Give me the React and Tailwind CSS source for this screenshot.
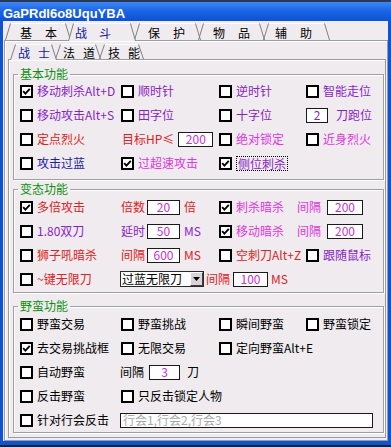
import React from "react";

const PURPLE = "text-[#8a1ec8]";
const MAGENTA = "text-[#e236e2]";
const RED = "text-[#e02222]";
const NAVY = "text-[#1c1ca6]";
const BLACK = "text-black";

function Box({ checked }) {
    return (
        <span className="flex h-[13px] w-[13px] shrink-0 items-center justify-center border-2 border-black bg-white">
            {checked && (
                <svg width="9" height="9" viewBox="0 0 9 9">
                    <path d="M1.2 4.2 L3.4 6.6 L7.8 1.8" fill="none" stroke="#000" strokeWidth="1.9" />
                </svg>
            )}
        </span>
    );
}

function Check({ checked, label, color = BLACK, focus }) {
    return (
        <div className="flex items-center gap-[4px] whitespace-nowrap">
            <Box checked={checked} />
            <span className={focus ? `${color} border border-dotted border-black px-[1px] leading-[13px]` : color}>
                {label}
            </span>
        </div>
    );
}

function Field({ value, className = "", color = "text-[#c832d0]" }) {
    return (
        <span className={`flex h-[15px] shrink-0 items-center justify-center border border-[#1a1a1a] bg-white ${color} ${className}`}>
            {value}
        </span>
    );
}

function Select() {
    return (
        <div className="flex h-[16px] w-[84px] shrink-0 items-stretch border border-[#2a2a2a] bg-white">
            <span className="flex flex-1 items-center pl-[1px] text-black">过蓝无限刀</span>
            <span className="flex w-[13px] items-center justify-center border border-b-[#404040] border-l-white border-r-[#404040] border-t-white bg-[#d8d4d8]">
                <svg width="7" height="4" viewBox="0 0 7 4">
                    <path d="M0 0 H7 L3.5 4 Z" fill="#000" />
                </svg>
            </span>
        </div>
    );
}

// slanted tab, outline drawn as svg behind the label
function Tab({ w, h, selected, chars, className, gap }) {
    const bottom = selected ? h : h - 1;
    return (
        <div className={`relative flex shrink-0 items-center ${selected ? "z-10" : ""} ${className}`}>
            <svg className="absolute left-0 top-0" width={w} height={h}>
                <path
                    d={`M0.5 ${bottom} L5.5 0.5 L${w - 5.5} 0.5 L${w - 0.5} ${bottom}`}
                    fill={selected ? "#efebef" : "none"}
                    stroke="none"
                />
                <path d={`M5.5 0.5 L${w - 5.5} 0.5`} stroke="#ffffff" fill="none" />
                <path d={`M0.5 ${bottom} L5.5 0.5`} stroke="#808080" fill="none" />
                <path d={`M${w - 5.5} 0.5 L${w - 0.5} ${bottom}`} stroke="#808080" fill="none" />
            </svg>
            <span className={`relative flex pt-[1px] ${gap} ${selected ? "text-[#1420a0]" : "text-black"}`}>
                <span>{chars[0]}</span>
                <span>{chars[1]}</span>
            </span>
        </div>
    );
}

function Group({ title, className = "", children }) {
    return (
        <fieldset className={`mr-[1px] border border-[#a0a0a0] pl-[6px] shadow-[inset_1px_1px_0_#fff,1px_1px_0_#fff] ${className}`}>
            <legend className="ml-[-2px] px-[2px] leading-[12px] text-[#109010]">{title}</legend>
            {children}
        </fieldset>
    );
}

export default function App() {
    return (
        <div className="flex h-[447px] w-[391px] flex-col overflow-hidden bg-[#0f52d4] font-['Noto_Sans_CJK_SC','Noto_Sans',sans-serif] text-[12px] leading-[14px]">
            <div className="h-[2px] shrink-0 bg-[#29395a]" />
            <div className="flex h-[19px] shrink-0 items-center bg-linear-to-b from-[#3d87f5] via-[#1864e3] to-[#0b52d0] pl-[3px] pt-[4px] font-['Liberation_Sans',sans-serif] text-[13px] font-bold text-white">
                GaPRdI6o8UquYBA
            </div>

            <div className="mx-[3px] flex min-h-0 flex-1 flex-col bg-[#efebef] pt-[1px]">
                {/* main tabs */}
                <div className="relative z-10 -mb-px flex h-[19px] items-end pl-[2px]">
                    <Tab w={66} h={18} chars={["基", "本"]} gap="gap-[13px]" className="h-[18px] w-[66px] pl-[15px]" />
                    <Tab w={68} h={18} selected chars={["战", "斗"]} gap="gap-[12px]" className="-ml-[3px] h-[18px] w-[68px] pl-[7px]" />
                    <Tab w={67} h={18} chars={["保", "护"]} gap="gap-[13px]" className="-ml-[2px] h-[18px] w-[67px] pl-[14px]" />
                    <Tab w={67} h={18} chars={["物", "品"]} gap="gap-[13px]" className="-ml-[3px] h-[18px] w-[67px] pl-[15px]" />
                    <Tab w={67} h={18} chars={["辅", "助"]} gap="gap-[13px]" className="-ml-[2px] h-[18px] w-[67px] pl-[12px]" />
                </div>

                <div className="ml-[1px] flex min-h-0 flex-1 flex-col border border-[#9c9c9c] shadow-[inset_1px_1px_0_#fff]">
                    {/* sub tabs */}
                    <div className="relative z-10 -mb-px flex h-[19px] items-end pl-[5px]">
                        <Tab w={47} h={16} selected chars={["战", "士"]} gap="gap-[8px]" className="h-[16px] w-[47px] pl-[8px]" />
                        <Tab w={46} h={16} chars={["法", "道"]} gap="gap-[8px]" className="-ml-[2px] h-[16px] w-[46px] pl-[8px]" />
                        <Tab w={45} h={16} chars={["技", "能"]} gap="gap-[8px]" className="-ml-[2px] h-[16px] w-[45px] pl-[9px]" />
                    </div>

                    <div className="mb-[2px] ml-[3px] mr-[1px] flex min-h-0 flex-1 flex-col border border-[#9c9c9c] pl-[4px] pt-[8px] shadow-[inset_1px_1px_0_#fff]">
                        <Group title="基本功能" className="pb-[4px]">
                            <div className="-mt-px grid auto-rows-[24px] grid-cols-[101px_98px_87px_1fr] items-center">
                                <Check checked label="移动刺杀Alt+D" color={PURPLE} />
                                <Check label="顺时针" color={PURPLE} />
                                <Check label="逆时针" color={PURPLE} />
                                <Check label="智能走位" color={PURPLE} />

                                <Check label="移动攻击Alt+S" color={PURPLE} />
                                <Check label="田字位" color={PURPLE} />
                                <Check label="十字位" color={PURPLE} />
                                <div className="flex items-center gap-[8px]">
                                    <Field value="2" className="w-[22px]" color={PURPLE} />
                                    <span className={PURPLE}>刀跑位</span>
                                </div>

                                <Check label="定点烈火" color={RED} />
                                <div className="ml-[1px] flex items-center gap-[4px]">
                                    <span className={RED}>目标HP≤</span>
                                    <Field value="200" className="w-[35px]" />
                                </div>
                                <Check label="绝对锁定" color={MAGENTA} />
                                <Check label="近身烈火" color={MAGENTA} />

                                <Check label="攻击过蓝" color={NAVY} />
                                <Check checked label="过超速攻击" color={MAGENTA} />
                                <Check checked focus label="侧位刺杀" color={PURPLE} />
                                <div />
                            </div>
                        </Group>

                        <Group title="变态功能" className="mt-[3px] pb-[1px]">
                            <div className="grid auto-rows-[24px] grid-cols-[101px_98px_87px_1fr] items-center">
                                <Check checked label="多倍攻击" color={RED} />
                                <div className="flex items-center">
                                    <span className={RED}>倍数</span>
                                    <Field value="20" className="ml-[2px] w-[33px]" />
                                    <span className={`${RED} ml-[4px]`}>倍</span>
                                </div>
                                <div className="col-span-2 flex items-center">
                                    <Check checked label="刺杀暗杀" color={MAGENTA} />
                                    <span className={`${MAGENTA} ml-[13px]`}>间隔</span>
                                    <Field value="200" className="ml-[6px] w-[36px]" />
                                </div>

                                <Check label="1.80双刀" color={PURPLE} />
                                <div className="flex items-center">
                                    <span className={PURPLE}>延时</span>
                                    <Field value="50" className="ml-[2px] w-[33px]" />
                                    <span className={`${PURPLE} ml-[4px]`}>MS</span>
                                </div>
                                <div className="col-span-2 flex items-center">
                                    <Check checked label="移动暗杀" color={MAGENTA} />
                                    <span className={`${MAGENTA} ml-[13px]`}>间隔</span>
                                    <Field value="200" className="ml-[6px] w-[36px]" />
                                </div>

                                <Check label="狮子吼暗杀" color={RED} />
                                <div className="flex items-center">
                                    <span className={RED}>间隔</span>
                                    <Field value="600" className="ml-[2px] w-[33px]" />
                                    <span className={`${RED} ml-[4px]`}>MS</span>
                                </div>
                                <Check label="空刺刀Alt+Z" color={RED} />
                                <Check label="跟随鼠标" color={PURPLE} />

                                <Check label="~键无限刀" color={RED} />
                                <div className="col-span-3 -ml-px flex items-center">
                                    <Select />
                                    <span className={`${RED} ml-[2px]`}>间隔</span>
                                    <Field value="100" className="ml-[3px] w-[35px]" />
                                    <span className={`${RED} ml-[3px]`}>MS</span>
                                </div>
                            </div>
                        </Group>

                        <Group title="野蛮功能" className="mt-[7px]">
                            <div className="grid auto-rows-[24px] grid-cols-[101px_98px_87px_1fr] items-center">
                                <Check label="野蛮交易" />
                                <Check label="野蛮挑战" />
                                <Check label="瞬间野蛮" />
                                <Check label="野蛮锁定" />

                                <Check checked label="去交易挑战框" />
                                <Check label="无限交易" />
                                <div className="col-span-2">
                                    <Check label="定向野蛮Alt+E" />
                                </div>

                                <Check label="自动野蛮" />
                                <div className="col-span-3 -ml-px flex items-center">
                                    <span>间隔</span>
                                    <Field value="3" className="ml-[5px] w-[31px]" />
                                    <span className="ml-[7px]">刀</span>
                                </div>

                                <Check label="反击野蛮" />
                                <div className="col-span-3">
                                    <Check label="只反击锁定人物" />
                                </div>

                                <Check label="针对行会反击" />
                                <div className="col-span-3 -ml-px">
                                    <span className="flex h-[15px] w-[253px] items-center border border-[#1a1a1a] bg-white pl-[2px] text-[#a8a8a8]">
                                        行会1,行会2,行会3
                                    </span>
                                </div>
                            </div>
                        </Group>
                    </div>
                </div>
            </div>

            <div className="h-[4px] shrink-0" />
            <div className="h-[2px] shrink-0 bg-[#1d2333]" />
        </div>
    );
}
